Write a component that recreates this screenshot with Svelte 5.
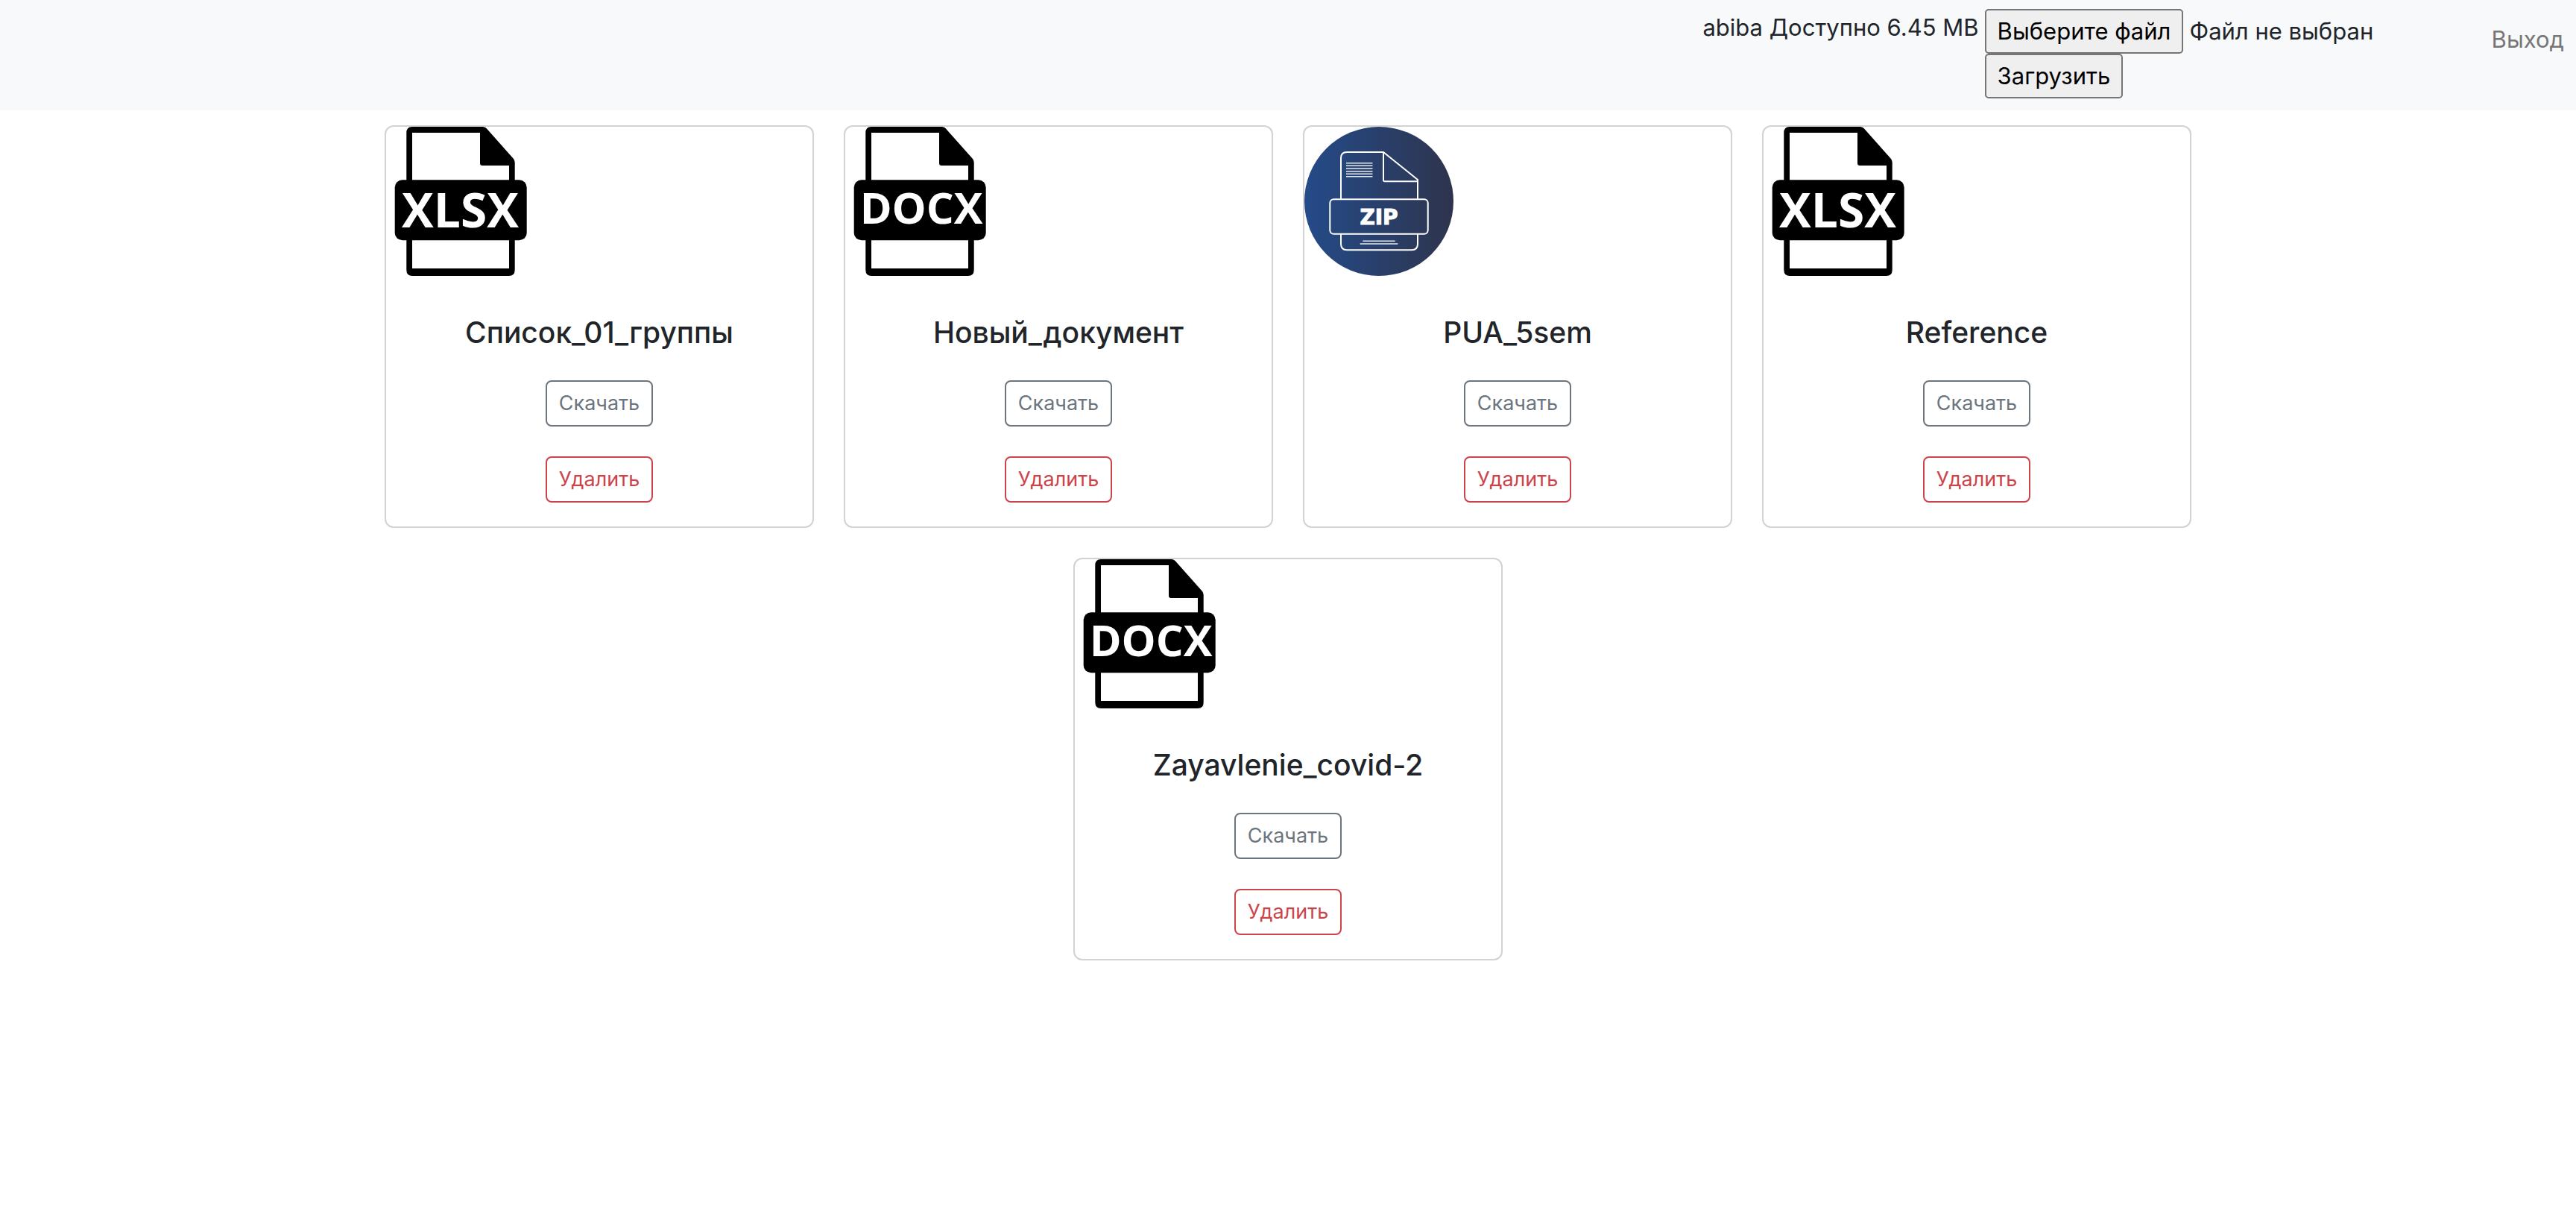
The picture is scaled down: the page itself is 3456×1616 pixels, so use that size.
<script>
  const account = { name: 'abiba', free: '6.45 MB' };

  const files = [
    { name: 'Список_01_группы', type: 'XLSX' },
    { name: 'Новый_документ', type: 'DOCX' },
    { name: 'PUA_5sem', type: 'ZIP' },
    { name: 'Reference', type: 'XLSX' },
    { name: 'Zayavlenie_covid-2', type: 'DOCX' }
  ];

  let chosen = $state('');

  function pick(event) {
    chosen = event.currentTarget.files[0]?.name ?? '';
  }
</script>

{#snippet documentIcon(type)}
  <svg class="icon" viewBox="0 0 200 200" role="img" aria-label={type}>
    <path
      fill-rule="evenodd"
      d="M35 0H130Q133 0 135 2.500L171 43Q172.700 45 172.700 48V192Q172.700 200 164.700 200H35.300Q27.300 200 27.300 192V8Q27.300 0 35 0ZM35 8V190H165V52H129Q126 52 126 49V8Z"
    />
    <rect x="11.700" y="71.300" width="177" height="81" rx="10" />
    {#if type === 'XLSX'}
      <text class="xlsx" x="99.500" y="134.700">XLSX</text>
    {:else}
      <text class="docx" x="102" y="130">DOCX</text>
    {/if}
  </svg>
{/snippet}

{#snippet archiveIcon()}
  <svg class="icon" viewBox="0 0 200 200" role="img" aria-label="ZIP">
    <defs>
      <linearGradient id="disc" x1="0" y1="0" x2="1" y2="0">
        <stop offset="0" stop-color="#244b89" />
        <stop offset="1" stop-color="#2e344d" />
      </linearGradient>
    </defs>
    <circle cx="100" cy="100" r="100" fill="url(#disc)" />
    <g class="outline">
      <path d="M49 97V42Q49 34 57 34H106L152 71V97M106 34V71.500Q106 73.300 108 73.300H152" />
      <path d="M49 144V157Q49 165.300 57 165.300H144Q152 165.300 152 157V144" />
      <rect x="34.300" y="97.300" width="131.400" height="46.400" rx="5" />
    </g>
    <path
      class="lines"
      d="M56 48.700H91.500M56 52.200H91.500M56 56H91.500M56 59.700H91.500M56 63.300H91.500M56 66.800H91.500M78.300 153.300H121.700M74.700 157H125.300"
    />
    <text class="zip" x="100" y="131">ZIP</text>
  </svg>
{/snippet}

<header class="navbar">
  <span class="account">{account.name} Доступно {account.free}</span>
  <form class="upload" onsubmit={(e) => e.preventDefault()}>
    <div class="chooser">
      <input id="file" class="native" type="file" onchange={pick} />
      <label class="plain" for="file">Выберите файл</label>
      <span>{chosen || 'Файл не выбран'}</span>
    </div>
    <button class="plain" type="submit">Загрузить</button>
  </form>
  <a class="exit" href="#exit">Выход</a>
</header>

<main class="files">
  {#each files as file}
    <article class="card">
      {#if file.type === 'ZIP'}
        {@render archiveIcon()}
      {:else}
        {@render documentIcon(file.type)}
      {/if}
      <div class="body">
        <h5>{file.name}</h5>
        <button class="action download" type="button">Скачать</button>
        <button class="action remove" type="button">Удалить</button>
      </div>
    </article>
  {/each}
</main>

<style>
  :global(body) {
    margin: 0;
    background: #fff;
    color: #212529;
    font-family: Inter, 'Liberation Sans', sans-serif;
    font-size: 31px;
    line-height: 50px;
  }

  .navbar {
    display: flex;
    justify-content: flex-end;
    align-items: flex-start;
    padding: 12px 16px 16px;
    background: #f8f9fb;
  }

  .account {
    margin-right: 8px;
  }

  .upload {
    display: flex;
    flex-direction: column;
    align-items: flex-start;
    width: 680px;
  }

  .chooser {
    display: flex;
    align-items: center;
    gap: 8px;
  }

  .native {
    position: absolute;
    width: 1px;
    height: 1px;
    opacity: 0;
  }

  .plain {
    box-sizing: border-box;
    height: 60px;
    margin: 0;
    padding: 3px 15px;
    border: 2px solid #767676;
    border-radius: 5px;
    background: #efefef;
    color: #000;
    font: inherit;
    cursor: pointer;
  }

  .exit {
    padding: 16px 0;
    color: #777;
    text-decoration: none;
  }

  .files {
    display: flex;
    flex-wrap: wrap;
    justify-content: center;
    gap: 40px;
    max-width: 2640px;
    margin: 0 auto;
    padding: 20px 0;
  }

  .card {
    box-sizing: border-box;
    width: 576px;
    border: 2px solid #d2d2d2;
    border-radius: 12px;
    background: #fff;
  }

  .icon {
    display: block;
    width: 200px;
    height: 200px;
  }

  .icon text {
    fill: #fff;
    font-family: 'Open Sans', 'Noto Sans', sans-serif;
    font-weight: 700;
    text-anchor: middle;
  }

  .icon .xlsx {
    font-size: 64px;
  }

  .icon .docx {
    font-size: 58px;
  }

  .icon .zip {
    stroke: #fff;
    stroke-width: 1;
    font-family: 'DejaVu Sans', sans-serif;
    font-size: 28px;
  }

  .outline {
    fill: none;
    stroke: #fff;
    stroke-width: 2;
    stroke-linejoin: round;
  }

  .lines {
    stroke: #e6eaf2;
    stroke-width: 1.5;
  }

  .body {
    display: flex;
    flex-direction: column;
    align-items: center;
    gap: 40px;
    padding: 52px 32px 32px;
  }

  h5 {
    margin: 0;
    font-size: 39px;
    font-weight: 500;
    line-height: 48px;
  }

  .action {
    padding: 8px 16px;
    border: 2px solid currentColor;
    border-radius: 8px;
    background: transparent;
    font: inherit;
    font-size: 27px;
    line-height: 42px;
    cursor: pointer;
  }

  .download {
    color: #6c757d;
  }

  .remove {
    color: #cb444a;
  }
</style>
